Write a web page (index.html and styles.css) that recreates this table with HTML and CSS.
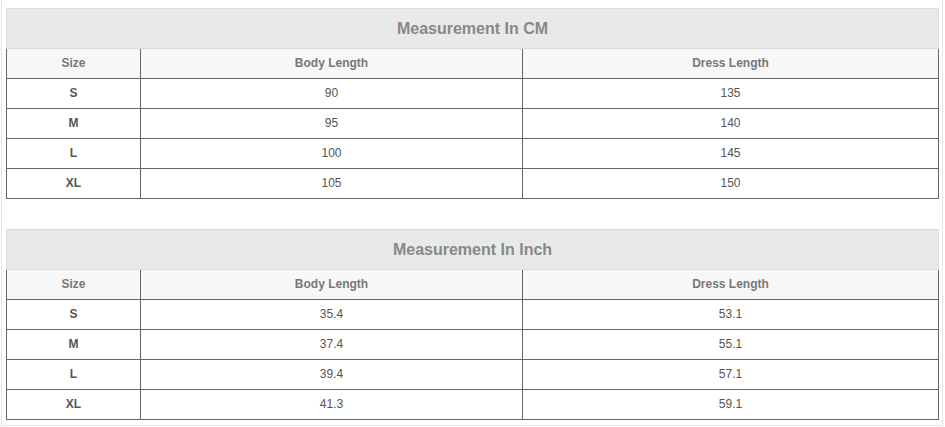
FILE: index.html
```html
<!DOCTYPE html>
<html>
<head>
<meta charset="utf-8">
<link rel="stylesheet" href="styles.css">
</head>
<body>
<div class="wrap">
  <table class="chart">
    <colgroup><col class="c1"><col class="c2"><col class="c3"></colgroup>
    <tr><th class="title" colspan="3">Measurement In CM</th></tr>
    <tr class="head"><th>Size</th><th>Body Length</th><th>Dress Length</th></tr>
    <tr><th class="size">S</th><td>90</td><td>135</td></tr>
    <tr><th class="size">M</th><td>95</td><td>140</td></tr>
    <tr><th class="size">L</th><td>100</td><td>145</td></tr>
    <tr><th class="size">XL</th><td>105</td><td>150</td></tr>
  </table>
  <table class="chart">
    <colgroup><col class="c1"><col class="c2"><col class="c3"></colgroup>
    <tr><th class="title" colspan="3">Measurement In Inch</th></tr>
    <tr class="head"><th>Size</th><th>Body Length</th><th>Dress Length</th></tr>
    <tr><th class="size">S</th><td>35.4</td><td>53.1</td></tr>
    <tr><th class="size">M</th><td>37.4</td><td>55.1</td></tr>
    <tr><th class="size">L</th><td>39.4</td><td>57.1</td></tr>
    <tr><th class="size">XL</th><td>41.3</td><td>59.1</td></tr>
  </table>
</div>
</body>
</html>
```
FILE: styles.css
```css
html, body {
  margin: 0;
  padding: 0;
  background: #fff;
  font-family: "Liberation Sans", Arial, sans-serif;
}
.wrap {
  width: 942px;
  margin-left: 1px;
  border: 1px solid #e6e6e6;
  border-top: none;
  padding: 8px 4px 5px 4px;
  box-sizing: border-box;
  display: flex;
  flex-direction: column;
  gap: 30px;
}
.chart {
  width: 932px;
  border-collapse: collapse;
  table-layout: fixed;
}
.c1 { width: 134px; }
.c2 { width: 382px; }
.c3 { width: 416px; }
.chart th, .chart td {
  border: 1px solid #666;
  height: 28px;
  padding: 0 0 1px 0;
  text-align: center;
  vertical-align: middle;
  font-size: 12px;
  color: #555;
}
.chart th.title {
  border: 1px solid #dcdcdc;
  background: #e9e9e9;
  height: 39px;
  padding: 0;
  font-size: 16px;
  font-weight: bold;
  color: #888;
}
.chart .head th {
  background: #f7f7f7;
  font-weight: bold;
  color: #777;
  height: 27px;
  padding-bottom: 2px;
}
.chart th.size {
  font-weight: bold;
  color: #555;
}
```
